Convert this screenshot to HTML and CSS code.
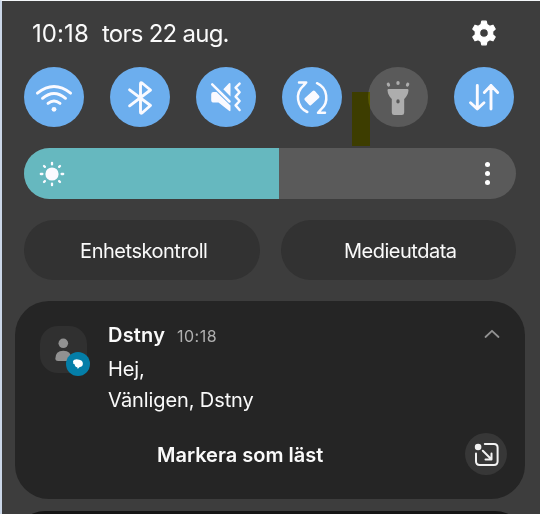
FILE: index.html
```html
<!DOCTYPE html>
<html lang="sv">
<head>
<meta charset="utf-8">
<title>Aviseringar</title>
<link rel="stylesheet" href="styles.css">
</head>
<body>
<main class="panel">
  <header class="status">
    <span class="clock">10:18</span>
    <span class="date">tors 22 aug.</span>
    <svg class="gear" viewBox="0 0 28 28"><path fill-rule="evenodd" d="M11.8 2.2h4.4l.8 3.4 2.7 1.6 3.3-1 2.2 3.8-2.5 2.4v3.2l2.5 2.4-2.2 3.8-3.3-1-2.7 1.6-.8 3.4h-4.4l-.8-3.4-2.7-1.6-3.3 1-2.2-3.8 2.5-2.4v-3.2l-2.5-2.4 2.2-3.8 3.3 1 2.7-1.6zM14 9.6a4.4 4.4 0 1 0 0 8.8 4.4 4.4 0 0 0 0-8.8z"/></svg>
  </header>

  <section class="toggles">
    <svg class="toggle" viewBox="0 0 60 60"><g class="line"><path d="M13.4 26.2Q30 12.8 46.6 26.2M18.5 31.3Q30 21.5 41.5 31.3M24 36.4Q30 31.5 36 36.4"/></g><circle class="solid" cx="30" cy="42.3" r="2.4"/></svg>
    <svg class="toggle" viewBox="0 0 60 60"><path class="line" d="M19.6 22.8 40.5 38.5 32 46Q30.5 46.8 30.5 45V17Q30.5 15 32 16L40.5 23 19.6 38.8"/></svg>
    <svg class="toggle" viewBox="0 0 60 60"><path class="solid" d="M27.3 22.2 33 16.3Q34.5 15.3 34.5 17V29.4zM17.5 25H20.5L34.5 38.5V43Q34.5 45 33 43.8L22.5 35.6H18Q15.2 35.6 15.2 33V27.3Q15.2 25 17.5 25z"/><path class="line line-thin" d="M16.2 17.4 33.5 34.5M43.6 16.7 39.6 20.6 43.6 25.2 39.6 29.6 43.6 34 39.6 38.4 43.6 43"/></svg>
    <svg class="toggle" viewBox="0 0 60 60"><path class="line line-thin" d="M17 15.4H24.2L21.5 18.6A15.8 15.8 0 0 0 25.3 45M35 16.2A15.8 15.8 0 0 1 38.8 42.6L36 45.8H43"/><rect class="solid" x="23.2" y="26.2" width="13.6" height="9.4" rx="1.6" transform="rotate(-42 30 31)"/></svg>
    <svg class="toggle toggle-off" viewBox="0 0 60 60"><path class="solid" fill-rule="evenodd" d="M20.6 22H39.4Q40.5 22 40.5 23.2 40.2 28 36.2 32V45.5Q36.2 48 33.8 48H26.2Q23.8 48 23.8 45.5V32Q19.8 28 19.5 23.2 19.5 22 20.6 22zM30 32.3a1.7 2.1 0 1 0 0 4.2 1.7 2.1 0 0 0 0-4.2z"/><g class="solid"><ellipse cx="20.4" cy="17.6" rx="1.6" ry="2.1" transform="rotate(-25 20.4 17.6)"/><ellipse cx="30" cy="16" rx="1.7" ry="2.1"/><ellipse cx="39.6" cy="17.6" rx="1.6" ry="2.1" transform="rotate(25 39.6 17.6)"/></g></svg>
    <svg class="toggle" viewBox="0 0 60 60"><path class="line" d="M23.3 18.5V42M16.5 35.8 23.3 42 30 35.8M37 42V18.5M30.3 25.4 37 18.5 43.7 25.4"/></svg>
    <span class="marker"></span>
  </section>

  <section class="slider">
    <div class="slider-fill">
      <svg class="sun" viewBox="0 0 26 26"><circle class="solid" cx="13" cy="13" r="6.6"/><path d="M13 1.8V3.4M13 22.6V24.2M1.8 13H3.4M22.6 13H24.2M5 5 5.9 5.9M20.1 20.1 21 21M5 21 5.9 20.1M20.1 5.9 21 5"/></svg>
    </div>
    <div class="dots"><i></i><i></i><i></i></div>
  </section>

  <section class="buttons">
    <div class="button">Enhetskontroll</div>
    <div class="button">Medieutdata</div>
  </section>

  <article class="card">
    <div class="avatar">
      <svg class="person" viewBox="0 0 47 47"><circle cx="23.3" cy="17.3" r="4.8"/><path d="M15.3 33Q15.3 24.8 23.3 24.8T31.3 33Q31 35 28.5 35H18Q15.5 35 15.3 33z"/></svg>
      <svg class="badge" viewBox="0 0 24 24"><circle cx="12" cy="12" r="12" fill="#047ea8"/><path fill="#fff" d="M7 9Q8 7 12 7.4 16.9 7.8 16.9 11.8 16.7 15 13.3 15.2L11.8 17 11.2 15.2Q8.6 14.8 8.8 12.5L7.3 11.7z"/></svg>
    </div>
    <div class="message">
      <div class="title"><strong>Dstny</strong><time>10:18</time></div>
      <p>Hej,</p>
      <p>Vänligen, Dstny</p>
      <div class="action">Markera som läst</div>
    </div>
    <div class="side">
      <svg class="chevron" viewBox="0 0 16 10"><path d="M1.5 8 8 1.8 14.5 8"/></svg>
      <svg class="popup" viewBox="0 0 42 42"><circle cx="21" cy="21" r="21" fill="#373737"/><path d="M19.8 11H29Q32.6 11 32.6 14.6V28.3Q32.6 32 29 32H14.7Q11 32 11 28.3V20.4M17.8 17.7 26.3 26.2M20.5 26.4H26.5V20.5"/><circle cx="13.1" cy="14" r="3.3" fill="#f2f2f2"/></svg>
    </div>
  </article>
  <div class="next-card"></div>
</main>
</body>
</html>
```
FILE: styles.css
```css
* { box-sizing: border-box; }
body { margin: 0; background: #3d3d3d; }
svg { display: block; flex: none; }
.panel {
  height: 514px;
  overflow: hidden;
  border-left: 2px solid #cbd7e8;
  border-top: 1px solid #f4f7fa;
  background: #3d3d3d;
  color: #fafafa;
  font: 20px Inter, Roboto, sans-serif;
}
.status { display: flex; align-items: center; height: 64px; padding: 0 42px 0 30px; font-size: 24px; white-space: nowrap; }
.clock { width: 70px; letter-spacing: 0.1px; }
.date { letter-spacing: -0.75px; }
.gear { width: 28px; height: 28px; margin-left: auto; fill: #fff; stroke: #fff; stroke-width: 1.2; stroke-linejoin: round; }
.toggles { position: relative; display: flex; justify-content: space-between; margin: 2px 26px 0 22px; }
.toggle { width: 60px; height: 60px; border-radius: 50%; background: #6caeee; }
.toggle-off { background: #5a5a5a; }
.solid { fill: #fafaff; }
.toggle-off .solid { fill: #adadad; }
.line { fill: none; stroke: #fafaff; stroke-width: 2.9; stroke-linecap: round; stroke-linejoin: round; }
.line-thin { stroke-width: 2.5; }
.marker { position: absolute; left: 328px; top: 25px; width: 18px; height: 54px; background: #ffff00; mix-blend-mode: multiply; }
.slider { display: flex; justify-content: space-between; align-items: center; height: 51px; margin: 21px 24px 0 22px; border-radius: 26px; background: #5a5a5a; overflow: hidden; }
.slider-fill { display: flex; align-items: center; width: 255px; height: 51px; padding-left: 15px; background: #66b8bf; }
.sun { width: 26px; height: 26px; fill: none; stroke: #fafaff; stroke-width: 2.3; stroke-linecap: round; }
.sun circle { stroke: none; }
.dots { display: flex; flex-direction: column; gap: 3.4px; margin-right: 26px; }
.dots i { width: 5.4px; height: 5.4px; border-radius: 50%; background: #fff; }
.buttons { display: flex; gap: 21px; margin: 21px 24px 0 22px; }
.button { flex: 1; display: flex; align-items: center; justify-content: center; height: 60px; padding-top: 1px; padding-right: 0; padding-left: 4px; border-radius: 30px; background: #323232; letter-spacing: -0.48px; }
.card { display: flex; height: 198px; margin: 21px 15px 0 13px; padding: 24px 18px 0 24px; border-radius: 34px; background: #252525; }
.avatar { position: relative; width: 47px; height: 47px; margin-top: 1px; margin-left: 1px; border-radius: 18px; background: #303030; }
.person { width: 47px; height: 47px; fill: #919191; }
.badge { position: absolute; left: 26px; top: 26px; width: 24px; height: 24px; }
.message { width: 339px; margin-left: 21px; white-space: nowrap; }
.title { display: flex; align-items: baseline; height: 31px; margin-top: -2px; line-height: 24px; }
.title strong { width: 69px; font-weight: 600; letter-spacing: 0.2px; }
.title time { color: #b0b0b0; font-size: 16px; letter-spacing: 0.5px; }
.message p { margin: 0; height: 31px; line-height: 31px; letter-spacing: -0.1px; }
.action { margin: 24px 0 0 49px; height: 30px; line-height: 30px; font-weight: 600; }
.side { display: flex; flex-direction: column; align-items: flex-end; flex: 1; }
.chevron { width: 16px; height: 10px; margin: 4px 7px 0 0; fill: none; stroke: #929292; stroke-width: 1.8; stroke-linecap: round; stroke-linejoin: round; }
.popup { width: 42px; height: 42px; margin-top: 94px; fill: none; stroke: #f2f2f2; stroke-width: 2; stroke-linecap: round; stroke-linejoin: round; }
.popup circle { stroke: none; }
.next-card { height: 60px; margin: 12px 15px 0 13px; border-radius: 34px; background: #161616; }
```
